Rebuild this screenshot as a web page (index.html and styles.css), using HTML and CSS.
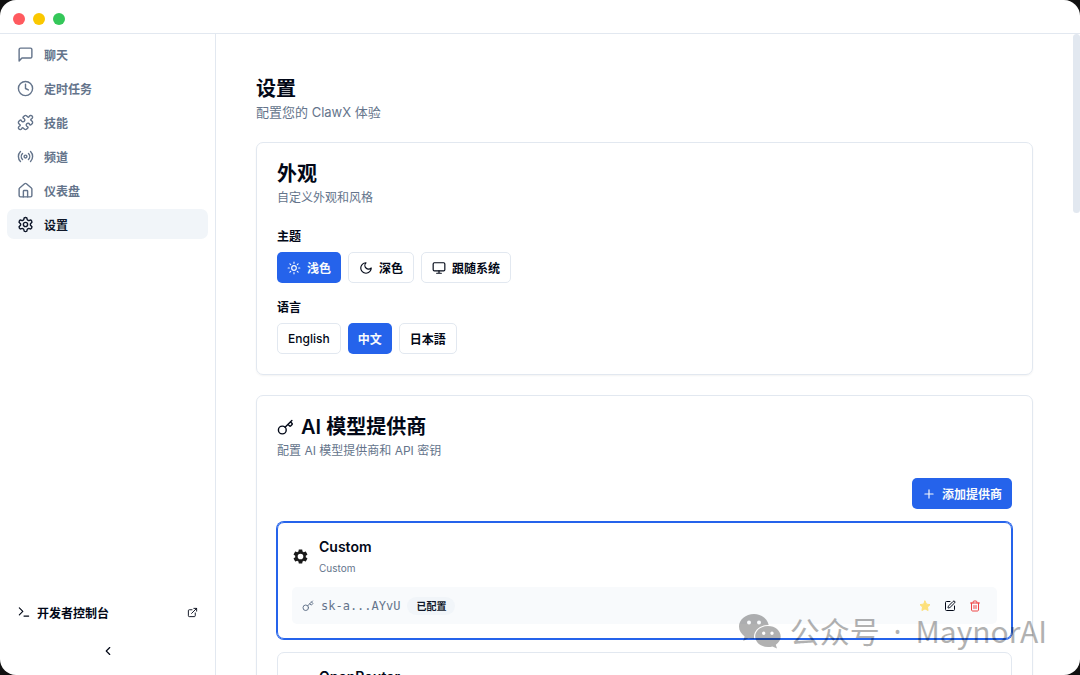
FILE: index.html
```html
<!DOCTYPE html>
<html lang="zh-CN">
<head>
  <meta charset="UTF-8">
  <title>ClawX</title>
  <meta name="viewport" content="width=device-width, initial-scale=1.0">
  <link rel="stylesheet" href="styles.css">
</head>
<body>
  <div class="window">
    <header class="titlebar">
      <span class="dot red"></span>
      <span class="dot yellow"></span>
      <span class="dot green"></span>
    </header>

    <div class="layout">
      <aside class="sidebar">
        <nav class="nav">
          <a href="#chat"><svg class="icon" viewBox="0 0 24 24"><path d="M21 15a2 2 0 0 1-2 2H7l-4 4V5a2 2 0 0 1 2-2h14a2 2 0 0 1 2 2z"/></svg>聊天</a>
          <a href="#cron"><svg class="icon" viewBox="0 0 24 24"><circle cx="12" cy="12" r="10"/><path d="M12 6v6l4 2"/></svg>定时任务</a>
          <a href="#skills"><svg class="icon" viewBox="0 0 24 24"><path d="M19.439 7.85c-.049.322.059.648.289.878l1.568 1.568c.47.47.706 1.087.706 1.704s-.235 1.233-.706 1.704l-1.611 1.611a.98.98 0 0 1-.837.276c-.47-.07-.802-.48-.968-.925a2.501 2.501 0 1 0-3.214 3.214c.446.166.855.497.925.968a.979.979 0 0 1-.276.837l-1.61 1.61a2.404 2.404 0 0 1-1.705.707 2.402 2.402 0 0 1-1.704-.706l-1.568-1.568a1.026 1.026 0 0 0-.877-.29c-.493.074-.84.504-1.02.968a2.5 2.5 0 1 1-3.237-3.237c.464-.18.894-.527.967-1.02a1.026 1.026 0 0 0-.289-.877l-1.568-1.568A2.402 2.402 0 0 1 1.998 12c0-.617.236-1.234.706-1.704L4.23 8.77c.24-.24.581-.353.917-.303.515.077.877.528 1.073 1.01a2.5 2.5 0 1 0 3.259-3.259c-.482-.196-.933-.558-1.01-1.073-.05-.336.062-.676.303-.917l1.525-1.525A2.402 2.402 0 0 1 12 1.998c.617 0 1.234.236 1.704.706l1.568 1.568c.23.23.556.338.877.29.493-.074.84-.504 1.02-.968a2.5 2.5 0 1 1 3.237 3.237c-.464.18-.894.527-.967 1.02Z"/></svg>技能</a>
          <a href="#channels"><svg class="icon" viewBox="0 0 24 24"><path d="M4.9 19.1C1 15.2 1 8.8 4.9 4.9M7.8 16.2c-2.3-2.3-2.3-6.1 0-8.5M16.2 7.8c2.3 2.3 2.3 6.1 0 8.5M19.1 4.9C23 8.8 23 15.1 19.1 19"/><circle cx="12" cy="12" r="2"/></svg>频道</a>
          <a href="#dashboard"><svg class="icon" viewBox="0 0 24 24"><path d="M15 21v-8a1 1 0 0 0-1-1h-4a1 1 0 0 0-1 1v8"/><path d="M3 10a2 2 0 0 1 .709-1.528l7-5.999a2 2 0 0 1 2.582 0l7 5.999A2 2 0 0 1 21 10v9a2 2 0 0 1-2 2H5a2 2 0 0 1-2-2z"/></svg>仪表盘</a>
          <a href="#settings" class="active"><svg class="icon" viewBox="0 0 24 24"><path d="M12.22 2h-.44a2 2 0 0 0-2 2v.18a2 2 0 0 1-1 1.73l-.43.25a2 2 0 0 1-2 0l-.15-.08a2 2 0 0 0-2.73.73l-.22.38a2 2 0 0 0 .73 2.73l.15.1a2 2 0 0 1 1 1.72v.51a2 2 0 0 1-1 1.74l-.15.09a2 2 0 0 0-.73 2.73l.22.38a2 2 0 0 0 2.73.73l.15-.08a2 2 0 0 1 2 0l.43.25a2 2 0 0 1 1 1.73V20a2 2 0 0 0 2 2h.44a2 2 0 0 0 2-2v-.18a2 2 0 0 1 1-1.73l.43-.25a2 2 0 0 1 2 0l.15.08a2 2 0 0 0 2.73-.73l.22-.39a2 2 0 0 0-.73-2.73l-.15-.08a2 2 0 0 1-1-1.74v-.5a2 2 0 0 1 1-1.74l.15-.09a2 2 0 0 0 .73-2.73l-.22-.38a2 2 0 0 0-2.73-.73l-.15.08a2 2 0 0 1-2 0l-.43-.25a2 2 0 0 1-1-1.73V4a2 2 0 0 0-2-2z"/><circle cx="12" cy="12" r="3"/></svg>设置</a>
        </nav>

        <div class="sidebar-footer">
          <button class="console-btn">
            <svg class="icon small" viewBox="0 0 24 24"><path d="m4 17 6-6-6-6M12 19h8"/></svg>
            开发者控制台
            <svg class="icon tiny push" viewBox="0 0 24 24"><path d="M15 3h6v6M10 14 21 3M18 13v6a2 2 0 0 1-2 2H5a2 2 0 0 1-2-2V8a2 2 0 0 1 2-2h6"/></svg>
          </button>
          <button class="collapse-btn" aria-label="收起侧边栏">
            <svg class="icon small" viewBox="0 0 24 24"><path d="m15 18-6-6 6-6"/></svg>
          </button>
        </div>
      </aside>

      <main class="content">
        <div class="page-header">
          <h1>设置</h1>
          <p>配置您的 ClawX 体验</p>
        </div>

        <section class="card">
          <h2>外观</h2>
          <p class="description">自定义外观和风格</p>
          <div class="fields">
            <div class="field" role="group" aria-labelledby="theme-label">
              <span class="label" id="theme-label">主题</span>
              <div class="options">
                <button class="btn primary"><svg class="icon small" viewBox="0 0 24 24"><circle cx="12" cy="12" r="4"/><path d="M12 2v2M12 20v2M4.93 4.93l1.41 1.41M17.66 17.66l1.41 1.41M2 12h2M20 12h2M6.34 17.66l-1.41 1.41M19.07 4.93l-1.41 1.41"/></svg>浅色</button>
                <button class="btn"><svg class="icon small" viewBox="0 0 24 24"><path d="M12 3a6 6 0 0 0 9 9 9 9 0 1 1-9-9Z"/></svg>深色</button>
                <button class="btn"><svg class="icon small" viewBox="0 0 24 24"><rect x="2" y="3" width="20" height="14" rx="2"/><path d="M8 21h8M12 17v4"/></svg>跟随系统</button>
              </div>
            </div>
            <div class="field" role="group" aria-labelledby="lang-label">
              <span class="label" id="lang-label">语言</span>
              <div class="options">
                <button class="btn" lang="en">English</button>
                <button class="btn primary">中文</button>
                <button class="btn" lang="ja">日本語</button>
              </div>
            </div>
          </div>
        </section>

        <section class="card">
          <h2><svg class="icon" viewBox="0 0 24 24"><path d="m15.5 7.5 2.3 2.3a1 1 0 0 0 1.4 0l2.1-2.1a1 1 0 0 0 0-1.4L19 4M21 2l-9.6 9.6"/><circle cx="7.5" cy="15.5" r="5.5"/></svg>AI 模型提供商</h2>
          <p class="description">配置 AI 模型提供商和 API 密钥</p>

          <div class="toolbar">
            <button class="btn primary"><svg class="icon small" viewBox="0 0 24 24"><path d="M5 12h14M12 5v14"/></svg>添加提供商</button>
          </div>

          <div class="providers">
            <article class="provider selected">
              <div class="provider-head">
                <svg class="gear" viewBox="0 0 24 24"><path d="M19.43 12.98c.04-.32.07-.64.07-.98s-.03-.66-.07-.98l2.11-1.65c.19-.15.24-.42.12-.64l-2-3.46c-.12-.22-.39-.3-.61-.22l-2.49 1c-.52-.4-1.08-.73-1.69-.98l-.38-2.65C14.46 2.18 14.25 2 14 2h-4c-.25 0-.46.18-.49.42l-.38 2.65c-.61.25-1.17.59-1.69.98l-2.49-1c-.23-.09-.49 0-.61.22l-2 3.46c-.13.22-.07.49.12.64l2.11 1.65c-.04.32-.07.65-.07.98s.03.66.07.98l-2.11 1.65c-.19.15-.24.42-.12.64l2 3.46c.12.22.39.3.61.22l2.49-1c.52.4 1.08.73 1.69.98l.38 2.65c.03.24.24.42.49.42h4c.25 0 .46-.18.49-.42l.38-2.65c.61-.25 1.17-.59 1.69-.98l2.49 1c.23.09.49 0 .61-.22l2-3.46c.12-.22.07-.49-.12-.64zM12 16a4 4 0 1 1 0-8 4 4 0 0 1 0 8z"/></svg>
                <div>
                  <h3>Custom</h3>
                  <p>Custom</p>
                </div>
              </div>
              <div class="key-row">
                <svg class="icon key" viewBox="0 0 24 24"><path d="m15.5 7.5 2.3 2.3a1 1 0 0 0 1.4 0l2.1-2.1a1 1 0 0 0 0-1.4L19 4M21 2l-9.6 9.6"/><circle cx="7.5" cy="15.5" r="5.5"/></svg>
                <code>sk-a...AYvU</code>
                <span class="badge">已配置</span>
                <div class="actions">
                  <button class="star" aria-label="默认"><svg class="icon key" viewBox="0 0 24 24"><path d="m12 2 3.09 6.26L22 9.27l-5 4.87 1.18 6.88L12 17.77l-6.18 3.25L7 14.14 2 9.27l6.91-1.01z"/></svg></button>
                  <button aria-label="编辑"><svg class="icon key" viewBox="0 0 24 24"><path d="M12 3H5a2 2 0 0 0-2 2v14a2 2 0 0 0 2 2h14a2 2 0 0 0 2-2v-7"/><path d="M18.375 2.625a1 1 0 0 1 3 3l-9.013 9.014a2 2 0 0 1-.853.505l-2.873.84a.5.5 0 0 1-.62-.62l.84-2.873a2 2 0 0 1 .506-.852z"/></svg></button>
                  <button class="danger" aria-label="删除"><svg class="icon key" viewBox="0 0 24 24"><path d="M3 6h18M19 6v14c0 1-1 2-2 2H7c-1 0-2-1-2-2V6M8 6V4c0-1 1-2 2-2h4c1 0 2 1 2 2v2M10 11v6M14 11v6"/></svg></button>
                </div>
              </div>
            </article>
            <article class="provider">
              <div class="provider-head">
                <span class="gear"></span>
                <div>
                  <h3>OpenRouter</h3>
                </div>
              </div>
            </article>
          </div>
        </section>
      </main>

      <div class="scrollbar"><div class="thumb"></div></div>
    </div>

    <div class="watermark">
      <svg viewBox="0 0 42 35"><path fill-rule="evenodd" d="M15 0C6.7 0 0 5.6 0 12.6c0 4 2.2 7.5 5.6 9.8L4.2 27l5.2-2.8c1.9.5 3.8.8 5.9.8A11.5 11.5 0 0 1 15 22.5c0-6.5 6.3-11.6 14-11.6h.7C28.3 4.600 22.200 0 15 0zM10 6.500a2 2 0 1 1 0 4 2 2 0 0 1 0-4zm10 0a2 2 0 1 1 0 4 2 2 0 0 1 0-4z"/><path fill-rule="evenodd" d="M29 12c-7.200 0-12.800 4.700-12.800 10.500S21.800 33 29 33c1.600 0 3.100-.2 4.500-.6L38 34.500l-1.200-3.800c3-2 4.900-4.900 4.900-8.200C41.700 16.700 36.200 12 29 12zM24.700 17.500a1.700 1.700 0 1 1 0 3.400 1.700 1.700 0 0 1 0-3.400zm8.300 0a1.700 1.700 0 1 1 0 3.400 1.700 1.700 0 0 1 0-3.400z"/></svg>
      <span>公众号<span class="middot"> · </span>MaynorAI</span>
    </div>
  </div>
</body>
</html>
```
FILE: styles.css
```css
* {
  box-sizing: border-box;
}
body {
  margin: 0;
  background: #111;
  color: #020817;
  font-family: Inter, "Noto Sans CJK SC", sans-serif;
  font-size: 12px;
}
h1, h2, h3, p {
  margin: 0;
}
button {
  font: inherit;
  color: inherit;
  background: none;
  border: none;
  padding: 0;
  cursor: pointer;
}
.window {
  position: relative;
  display: flex;
  flex-direction: column;
  height: 100vh;
  background: #fff;
  border-radius: 16px;
  overflow: hidden;
}

/* title bar */
.titlebar {
  display: flex;
  flex-shrink: 0;
  align-items: center;
  gap: 8px;
  height: 34px;
  padding: 5px 13px 0;
  border-bottom: 1px solid #e2e8f0;
}
.dot {
  width: 12px;
  height: 12px;
  border-radius: 50%;
}
.red { background: #ff5a5f; }
.yellow { background: #fac800; }
.green { background: #34c759; }

.layout {
  display: flex;
  flex: 1;
  min-height: 0;
}

/* icons */
.icon {
  flex-shrink: 0;
  width: 17px;
  height: 17px;
  fill: none;
  stroke: currentColor;
  stroke-width: 2;
  stroke-linecap: round;
  stroke-linejoin: round;
}
.icon.small {
  width: 14px;
  height: 14px;
}
.icon.key {
  width: 12px;
  height: 12px;
}
.icon.tiny {
  width: 11px;
  height: 11px;
}
.push {
  margin-left: auto;
}

/* sidebar */
.sidebar {
  display: flex;
  flex-direction: column;
  justify-content: space-between;
  flex-shrink: 0;
  width: 216px;
  padding: 5px 7px 7px;
  border-right: 1px solid #e2e8f0;
}
.nav {
  display: flex;
  flex-direction: column;
  gap: 4px;
}
.nav a {
  display: flex;
  align-items: center;
  gap: 10px;
  height: 30px;
  padding: 0 10px;
  border-radius: 7px;
  color: #64748b;
  font-weight: 600;
  text-decoration: none;
}
.nav a.active {
  background: #f1f5f9;
  color: #0f172a;
}
.sidebar-footer {
  display: flex;
  flex-direction: column;
  gap: 7px;
}
.console-btn {
  display: flex;
  align-items: center;
  gap: 6px;
  height: 30px;
  padding: 0 10px;
  font-weight: 600;
}
.collapse-btn {
  display: flex;
  align-items: center;
  justify-content: center;
  height: 34px;
}

/* settings page */
.content {
  flex: 1;
  min-width: 0;
  padding: 41px 40px 0;
  overflow-y: auto;
  scrollbar-width: none;
}
.page-header {
  margin-bottom: 20px;
}
h1 {
  font-size: 20px;
  line-height: 28px;
  font-weight: 600;
}
.page-header p {
  font-size: 13px;
  line-height: 19px;
  color: #64748b;
}
.card {
  margin-bottom: 20px;
  padding: 20px;
  border: 1px solid #e2e8f0;
  border-radius: 7px;
  box-shadow: 0 1px 2px rgba(0, 0, 0, 0.05);
}
h2 {
  display: flex;
  align-items: center;
  gap: 7px;
  font-size: 20px;
  line-height: 22px;
  font-weight: 600;
}
.description {
  margin-top: 4px;
  line-height: 18px;
  color: #64748b;
}
.fields {
  display: flex;
  flex-direction: column;
  gap: 17px;
  margin-top: 22px;
}
.field {
  display: flex;
  flex-direction: column;
  gap: 7px;
}
.label {
  line-height: 16px;
  font-weight: 600;
}
.options {
  display: flex;
  gap: 7px;
}
.btn {
  display: flex;
  align-items: center;
  gap: 6px;
  height: 31px;
  padding: 0 10px;
  border: 1px solid #e2e8f0;
  border-radius: 5px;
  font-weight: 600;
}
.btn:lang(en) {
  font-weight: 500;
}
.btn.primary {
  background: #2563eb;
  border: none;
  color: #f8fafc;
}
.toolbar {
  display: flex;
  justify-content: flex-end;
  margin-top: 18px;
}

/* providers */
.providers {
  display: flex;
  flex-direction: column;
  gap: 13px;
  margin-top: 13px;
}
.provider {
  padding: 14px;
  border: 1px solid #e2e8f0;
  border-radius: 7px;
}
.provider.selected {
  border-color: #2563eb;
  box-shadow: 0 0 0 1px #2563eb;
}
.provider-head {
  display: flex;
  align-items: center;
  gap: 10px;
}
.gear {
  width: 17px;
  height: 17px;
  fill: #1a1a1a;
}
h3 {
  font-size: 14px;
  line-height: 20px;
  font-weight: 600;
}
.provider-head p {
  margin-top: 4px;
  font-size: 10px;
  line-height: 14px;
  color: #64748b;
}
.key-row {
  display: flex;
  align-items: center;
  gap: 7px;
  height: 37px;
  margin-top: 12px;
  padding: 0 10px;
  border-radius: 5px;
  background: #f8fafc;
  color: #64748b;
}
.key-row code {
  font-family: "DejaVu Sans Mono", monospace;
  font-size: 12px;
}
.badge {
  padding: 0 9px;
  border-radius: 9px;
  background: #f1f5f9;
  color: #0f172a;
  font-size: 10px;
  line-height: 18px;
  font-weight: 600;
}
.actions {
  display: flex;
  gap: 1px;
  margin-left: auto;
  color: #020817;
}
.actions button {
  display: flex;
  align-items: center;
  justify-content: center;
  width: 24px;
  height: 24px;
}
.actions .star {
  color: #fde07a;
}
.actions .star .icon {
  fill: currentColor;
}
.actions .danger {
  color: #ef4444;
}

.scrollbar {
  width: 7px;
  flex-shrink: 0;
}
.thumb {
  height: 28%;
  border-radius: 4px;
  background: #e2e8f0;
}

.watermark {
  position: absolute;
  right: 33px;
  bottom: 23px;
  display: flex;
  align-items: center;
  gap: 9px;
  color: #000;
  opacity: 0.3;
  font-family: "Noto Sans CJK SC", sans-serif;
  font-size: 30px;
  line-height: 40px;
  pointer-events: none;
}
.watermark svg {
  width: 42px;
  height: 35px;
  fill: currentColor;
}
.middot {
  padding: 0 6px;
  font-family: "Noto Sans", sans-serif;
}
```
